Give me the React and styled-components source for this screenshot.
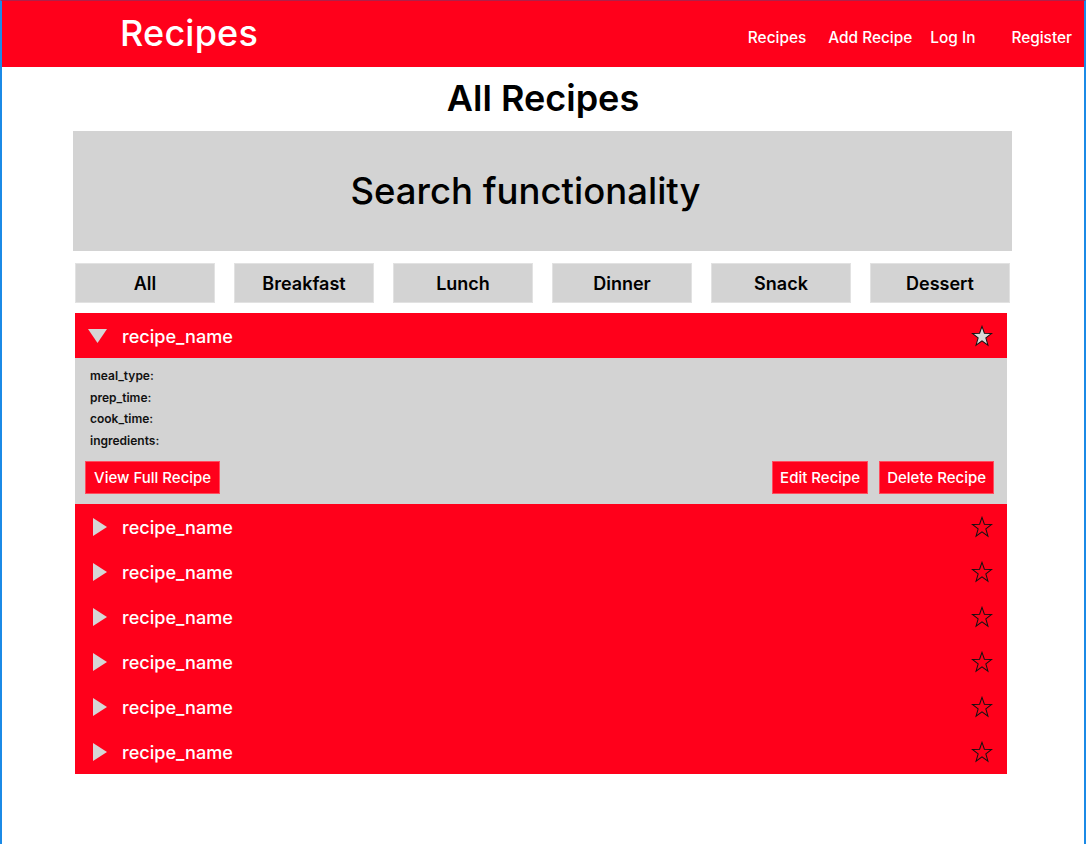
import React from "react";
import styled, { createGlobalStyle } from "styled-components";

const RED = "#ff001b";
const GRAY = "#d3d3d3";

const GlobalStyle = createGlobalStyle`
  html, body {
    margin: 0;
    padding: 0;
    background: #ffffff;
  }
  body {
    font-family: Inter, "Noto Sans", "Liberation Sans", sans-serif;
  }
  * {
    box-sizing: border-box;
  }
`;

const Frame = styled.div`
  width: 1086px;
  min-height: 844px;
  border-left: 2px solid #1b8ae6;
  border-right: 2px solid #1b8ae6;
  border-top: 1px solid #b0204a;
  background: #fff;
`;

const Header = styled.header`
  height: 66px;
  background: ${RED};
  display: flex;
  align-items: center;
  justify-content: space-between;
  padding: 0 12px 0 118px;
`;

const Brand = styled.div`
  color: #fff;
  font-size: 36px;
  font-weight: 500;
  letter-spacing: 0.2px;
  margin-top: -3px;
`;

const Nav = styled.nav`
  display: flex;
  align-items: center;
  gap: 22px;
  margin-top: 6px;
`;

const NavLink = styled.a`
  color: #fff;
  font-size: 15.4px;
  font-weight: 500;
  text-decoration: none;
  cursor: pointer;
  margin-left: ${(p) => p.$extra || 0}px;
`;

const Main = styled.main`
  width: 938px;
  margin: 0 auto;
  padding-bottom: 60px;
`;

const Heading = styled.h1`
  margin: 9px 0 11px;
  height: 44px;
  line-height: 44px;
  font-size: 36px;
  font-weight: 600;
  text-align: center;
  color: #000;
`;

const SearchBox = styled.section`
  height: 120px;
  background: ${GRAY};
  display: flex;
  align-items: center;
  justify-content: center;
  padding-right: 34px;
  font-size: 36.5px;
  font-weight: 500;
  color: #000;
  margin-left: -1px;
`;

const Categories = styled.div`
  display: flex;
  justify-content: space-between;
  width: 935px;
  margin: 12px 0 10px 1px;
`;

const CategoryButton = styled.button`
  width: 140px;
  height: 40px;
  background: ${GRAY};
  border: 1px solid #e2e2e2;
  font-family: inherit;
  font-size: 18px;
  font-weight: 600;
  color: #000;
  cursor: pointer;
`;

const List = styled.ul`
  list-style: none;
  margin: 0 0 0 1px;
  padding: 0;
  width: 932px;
`;

const Item = styled.li`
  background: ${RED};
`;

const RowHead = styled.div`
  height: 45px;
  display: flex;
  align-items: center;
  padding: 0 14px 0 0;
  color: #fff;
`;

const Caret = styled.span`
  width: 47px;
  display: flex;
  justify-content: ${(p) => (p.$open ? "flex-start" : "flex-end")};
  padding: ${(p) => (p.$open ? "0 0 0 13px" : "0 15px 0 0")};
`;

const Name = styled.span`
  flex: 1;
  font-size: 18.1px;
  font-weight: 500;
  margin-top: 1px;
`;

const Details = styled.div`
  background: ${GRAY};
  padding: 7px 13px 10px 10px;
`;

const Field = styled.div`
  font-size: 12px;
  font-weight: 600;
  line-height: 21.5px;
  color: #111;
  padding-left: 5px;
`;

const Actions = styled.div`
  display: flex;
  align-items: center;
  gap: 11px;
  margin-top: 10px;
`;

const ActionButton = styled.button`
  height: 33px;
  padding: 0 ${(p) => (p.$push ? 8 : 7)}px;
  background: ${RED};
  border: 1px solid #ff4d5e;
  color: #fff;
  font-family: inherit;
  font-size: 15px;
  font-weight: 500;
  cursor: pointer;
  margin-right: ${(p) => (p.$push ? "auto" : "0")};
`;

const Star = ({ filled }) => (
  <svg width="22" height="22" viewBox="0 0 24 24">
    <polygon
      points="12,1.5 14.6,9 22.5,9.2 16.2,14 18.5,22 12,17.3 5.5,22 7.8,14 1.5,9.2 9.4,9"
      fill={filled ? "#d8d8d8" : "none"}
      stroke="#111"
      strokeWidth="1.1"
      strokeLinejoin="miter"
    />
  </svg>
);

const Triangle = ({ open }) =>
  open ? (
    <svg width="19" height="14" viewBox="0 0 19 14">
      <polygon points="0,0 19,0 9.5,14" fill="#d6d6d6" />
    </svg>
  ) : (
    <svg width="14" height="18" viewBox="0 0 14 18">
      <polygon points="0,0 14,9 0,18" fill="#d6d6d6" />
    </svg>
  );

const categories = ["All", "Breakfast", "Lunch", "Dinner", "Snack", "Dessert"];
const fields = ["meal_type:", "prep_time:", "cook_time:", "ingredients:"];
const recipes = [true, false, false, false, false, false, false];

export default function App() {
  return (
    <>
      <GlobalStyle />
      <Frame>
        <Header>
          <Brand>Recipes</Brand>
          <Nav>
            <NavLink>Recipes</NavLink>
            <NavLink>Add Recipe</NavLink>
            <NavLink $extra={-4}>Log In</NavLink>
            <NavLink $extra={14}>Register</NavLink>
          </Nav>
        </Header>
        <Main>
          <Heading>All Recipes</Heading>
          <SearchBox>Search functionality</SearchBox>
          <Categories>
            {categories.map((c) => (
              <CategoryButton key={c}>{c}</CategoryButton>
            ))}
          </Categories>
          <List>
            {recipes.map((open, i) => (
              <Item key={i}>
                <RowHead>
                  <Caret $open={open}>
                    <Triangle open={open} />
                  </Caret>
                  <Name>recipe_name</Name>
                  <Star filled={open} />
                </RowHead>
                {open && (
                  <Details>
                    {fields.map((f) => (
                      <Field key={f}>{f}</Field>
                    ))}
                    <Actions>
                      <ActionButton $push>View Full Recipe</ActionButton>
                      <ActionButton>Edit Recipe</ActionButton>
                      <ActionButton>Delete Recipe</ActionButton>
                    </Actions>
                  </Details>
                )}
              </Item>
            ))}
          </List>
        </Main>
      </Frame>
    </>
  );
}
